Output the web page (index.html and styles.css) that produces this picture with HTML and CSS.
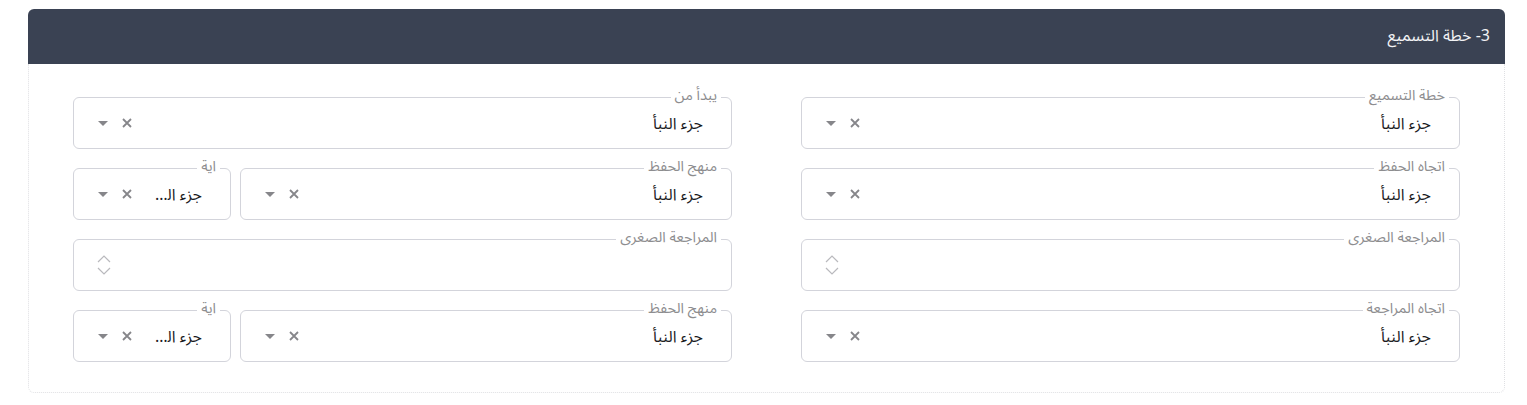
FILE: index.html
```html
<!DOCTYPE html>
<html lang="ar" dir="rtl">
<head>
<meta charset="utf-8">
<link rel="stylesheet" href="styles.css">
</head>
<body>
<div class="card">
  <div class="card-header">3- خطة التسميع</div>
  <div class="card-body">
    <div class="grid">
      <div class="field">
        <span class="label">خطة التسميع</span>
        <span class="value">جزء النبأ</span>
        <span class="icons"><svg class="x" viewBox="0 0 10 10"><path d="M1 1L9 9M9 1L1 9"/></svg><svg class="caret" viewBox="0 0 10 5"><path d="M0 0H10L5 5Z"/></svg></span>
      </div>
      <div class="field">
        <span class="label">يبدأ من</span>
        <span class="value">جزء النبأ</span>
        <span class="icons"><svg class="x" viewBox="0 0 10 10"><path d="M1 1L9 9M9 1L1 9"/></svg><svg class="caret" viewBox="0 0 10 5"><path d="M0 0H10L5 5Z"/></svg></span>
      </div>

      <div class="field">
        <span class="label">اتجاه الحفظ</span>
        <span class="value">جزء النبأ</span>
        <span class="icons"><svg class="x" viewBox="0 0 10 10"><path d="M1 1L9 9M9 1L1 9"/></svg><svg class="caret" viewBox="0 0 10 5"><path d="M0 0H10L5 5Z"/></svg></span>
      </div>
      <div class="split">
        <div class="field">
          <span class="label">منهج الحفظ</span>
          <span class="value">جزء النبأ</span>
          <span class="icons"><svg class="x" viewBox="0 0 10 10"><path d="M1 1L9 9M9 1L1 9"/></svg><svg class="caret" viewBox="0 0 10 5"><path d="M0 0H10L5 5Z"/></svg></span>
        </div>
        <div class="field">
          <span class="label">اية</span>
          <span class="value trunc">جزء النبأ</span>
          <span class="icons"><svg class="x" viewBox="0 0 10 10"><path d="M1 1L9 9M9 1L1 9"/></svg><svg class="caret" viewBox="0 0 10 5"><path d="M0 0H10L5 5Z"/></svg></span>
        </div>
      </div>

      <div class="field">
        <span class="label">المراجعة الصغرى</span>
        <span class="value"></span>
        <span class="icons"><svg class="spin" viewBox="0 0 16 24"><path d="M2 9L8 3L14 9M2 15L8 21L14 15"/></svg></span>
      </div>
      <div class="field">
        <span class="label">المراجعة الصغرى</span>
        <span class="value"></span>
        <span class="icons"><svg class="spin" viewBox="0 0 16 24"><path d="M2 9L8 3L14 9M2 15L8 21L14 15"/></svg></span>
      </div>

      <div class="field">
        <span class="label">اتجاه المراجعة</span>
        <span class="value">جزء النبأ</span>
        <span class="icons"><svg class="x" viewBox="0 0 10 10"><path d="M1 1L9 9M9 1L1 9"/></svg><svg class="caret" viewBox="0 0 10 5"><path d="M0 0H10L5 5Z"/></svg></span>
      </div>
      <div class="split">
        <div class="field">
          <span class="label">منهج الحفظ</span>
          <span class="value">جزء النبأ</span>
          <span class="icons"><svg class="x" viewBox="0 0 10 10"><path d="M1 1L9 9M9 1L1 9"/></svg><svg class="caret" viewBox="0 0 10 5"><path d="M0 0H10L5 5Z"/></svg></span>
        </div>
        <div class="field">
          <span class="label">اية</span>
          <span class="value trunc">جزء النبأ</span>
          <span class="icons"><svg class="x" viewBox="0 0 10 10"><path d="M1 1L9 9M9 1L1 9"/></svg><svg class="caret" viewBox="0 0 10 5"><path d="M0 0H10L5 5Z"/></svg></span>
        </div>
      </div>
    </div>
  </div>
</div>
</body>
</html>
```
FILE: styles.css
```css
* { box-sizing: border-box; }
html, body { margin: 0; padding: 0; background: #ffffff; }
body {
  font-family: "Noto Sans Arabic", "DejaVu Sans", "Noto Sans", sans-serif;
  direction: rtl;
}
.card {
  margin: 9px 22px 0 28px;
}
.card-header {
  height: 55px;
  background: #3a4253;
  color: #f2f3f5;
  border-radius: 6px 6px 0 0;
  font-size: 16px;
  display: flex;
  align-items: center;
  padding: 0 15px 2px 15px;
}
.card-body {
  border: 1px dotted #dfe0e3;
  border-top: none;
  border-radius: 0 0 6px 6px;
  padding: 33px 44px 30px 44px;
}
.grid {
  display: grid;
  grid-template-columns: 1fr 1fr;
  column-gap: 69px;
  row-gap: 19px;
}
.split {
  display: grid;
  grid-template-columns: 1fr 158px;
  column-gap: 9px;
}
.field {
  position: relative;
  height: 52px;
  border: 1px solid #d3d4db;
  border-radius: 6px;
  display: flex;
  align-items: center;
  padding: 0 28px 0 24px;
}
.label {
  position: absolute;
  top: -10px;
  right: 10px;
  background: #ffffff;
  padding: 0 4px;
  font-size: 14.5px;
  line-height: 16px;
  color: #8d8d8f;
  white-space: nowrap;
}
.value {
  flex: 1;
  font-size: 16px;
  line-height: 22px;
  padding-top: 2px;
  color: #1c1c1f;
  white-space: nowrap;
}
.value.trunc {
  flex: 0 0 auto;
  max-width: 48px;
  overflow: hidden;
  text-overflow: ellipsis;
  margin-left: auto;
}
.icons {
  display: flex;
  align-items: center;
  gap: 14px;
  margin-right: auto;
}
.x {
  width: 10px;
  height: 10px;
  stroke: #86868a;
  stroke-width: 1.8;
  fill: none;
}
.caret {
  width: 10px;
  height: 5px;
  fill: #86868a;
}
.spin {
  width: 16px;
  height: 24px;
  stroke: #b9b9bd;
  stroke-width: 1.2;
  fill: none;
  margin-left: -2px;
}
```
